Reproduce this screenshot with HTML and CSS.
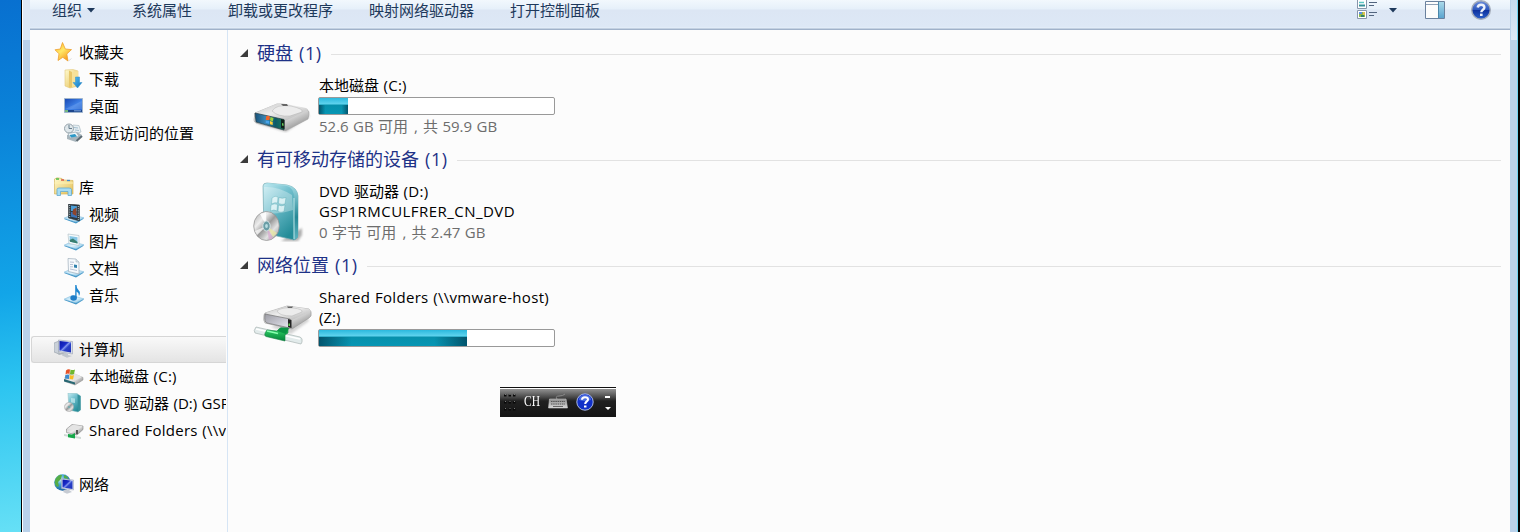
FILE: index.html
```html
<!DOCTYPE html>
<html lang="zh-CN">
<head>
<meta charset="utf-8">
<title>计算机</title>
<link rel="stylesheet" href="styles.css">
</head>
<body>
<svg class="defs" width="0" height="0">
  <defs>
    <linearGradient id="gold" x1="0" y1="0" x2="1" y2="1"><stop offset="0" stop-color="#fffbd0"/><stop offset="1" stop-color="#e4bd52"/></linearGradient>
    <linearGradient id="star" x1="0" y1="0" x2="0.7" y2="1"><stop offset="0" stop-color="#ffb01c"/><stop offset=".5" stop-color="#ffe868"/><stop offset="1" stop-color="#f79618"/></linearGradient>
    <linearGradient id="blue" x1="0" y1="0" x2="1" y2="1"><stop offset="0" stop-color="#1746b0"/><stop offset=".55" stop-color="#3f82e8"/><stop offset="1" stop-color="#2460ca"/></linearGradient>
    <linearGradient id="navy" x1="0" y1="0" x2="1" y2="1"><stop offset="0" stop-color="#0716a8"/><stop offset=".4" stop-color="#1a2cc8"/><stop offset=".5" stop-color="#7f94ee"/><stop offset=".62" stop-color="#2a42c8"/><stop offset="1" stop-color="#1c2fb8"/></linearGradient>
    <linearGradient id="arrow" x1="0" y1="0" x2="1" y2="1"><stop offset="0" stop-color="#52bdf2"/><stop offset="1" stop-color="#1175c0"/></linearGradient>
    <linearGradient id="tray" x1="0" y1="0" x2="1" y2="1"><stop offset="0" stop-color="#9fd3ee"/><stop offset=".5" stop-color="#dcf2fc"/><stop offset="1" stop-color="#6db4dc"/></linearGradient>
    <linearGradient id="metal" x1="0" y1="0" x2="1" y2="1"><stop offset="0" stop-color="#c4c4c4"/><stop offset=".45" stop-color="#ededed"/><stop offset="1" stop-color="#aaa"/></linearGradient>
    <linearGradient id="side" x1="0" y1="0" x2="1" y2="1"><stop offset="0" stop-color="#c2c2c2"/><stop offset=".5" stop-color="#ececec"/><stop offset="1" stop-color="#707070"/></linearGradient>
    <linearGradient id="face" x1="0" y1="0" x2="1" y2="0"><stop offset="0" stop-color="#165079"/><stop offset=".35" stop-color="#3b86b4"/><stop offset=".7" stop-color="#0c5a68"/><stop offset="1" stop-color="#1c7a5c"/></linearGradient>
    <linearGradient id="silver" x1="0" y1="0" x2="1" y2="1"><stop offset="0" stop-color="#9c9ca4"/><stop offset="1" stop-color="#e8e8f2"/></linearGradient>
    <linearGradient id="box" x1="0" y1="0" x2=".6" y2="1"><stop offset="0" stop-color="#c6ecf3"/><stop offset=".4" stop-color="#74c1cf"/><stop offset="1" stop-color="#248c98"/></linearGradient>
    <linearGradient id="spine" x1="0" y1="0" x2="0" y2="1"><stop offset="0" stop-color="#a8dfe8"/><stop offset=".6" stop-color="#248896"/><stop offset="1" stop-color="#5fb5c0"/></linearGradient>
    <linearGradient id="disc" x1="0" y1="0" x2="1" y2="1"><stop offset="0" stop-color="#a8a8a8"/><stop offset=".3" stop-color="#ededed"/><stop offset=".5" stop-color="#9a9a9a"/><stop offset=".7" stop-color="#e2e2e2"/><stop offset="1" stop-color="#858585"/></linearGradient>
    <linearGradient id="green" x1="0" y1="0" x2="0" y2="1"><stop offset="0" stop-color="#32d568"/><stop offset="1" stop-color="#04843a"/></linearGradient>
    <radialGradient id="globe" cx=".35" cy=".3" r=".75"><stop offset="0" stop-color="#d4f3fa"/><stop offset=".4" stop-color="#44a5d2"/><stop offset="1" stop-color="#135a9c"/></radialGradient>
    <linearGradient id="help" x1="0" y1="0" x2="0" y2="1"><stop offset="0" stop-color="#6e8fdc"/><stop offset=".48" stop-color="#2e58bd"/><stop offset=".5" stop-color="#0d2f9c"/><stop offset="1" stop-color="#2d62cc"/></linearGradient>
    <linearGradient id="pane" x1="0" y1="0" x2="0" y2="1"><stop offset="0" stop-color="#a9d9ea"/><stop offset="1" stop-color="#5ba4cf"/></linearGradient>
    <linearGradient id="keys" x1="0" y1="0" x2="0" y2="1"><stop offset="0" stop-color="#8b8b8b"/><stop offset="1" stop-color="#d8d8d8"/></linearGradient>
    <filter id="soft" x="-20%" y="-50%" width="140%" height="200%"><feGaussianBlur stdDeviation="1.3"/></filter>
    <symbol id="base" viewBox="0 0 20 20"><path d="M0 15 8 11.500 20 14.500 12 19.500Z" fill="#3f94c6"/><path d="M0 14.200 8 10.600 20 13.800 12 18Z" fill="url(#tray)" stroke="#7fb9da" stroke-width=".5"/></symbol>
  </defs>
</svg>

<div class="screen">
  <div class="desktop"></div>
  <div class="frame frame-left"></div>
  <div class="window">
    <header class="toolbar">
      <span class="cmd organize">组织<svg width="8" height="5"><path d="M0 0H8L4 4.600Z" fill="#1e395b"/></svg></span>
      <span class="cmd">系统属性</span>
      <span class="cmd">卸载或更改程序</span>
      <span class="cmd">映射网络驱动器</span>
      <span class="cmd">打开控制面板</span>
      <span class="tools">
        <svg class="views" width="21" height="20"><g stroke="#8796ab" fill="#fff"><path d="M.5-.5H9.500V8.500H.5ZM.5 10.500H9.500V18.500H.5Z"/></g><path d="M2 2.500H7" stroke="#5cc7c4" stroke-width="1.500"/><path d="M2 5.500H8" stroke="#348f98" stroke-width="2"/><path d="M2 12H8V17H2Z" fill="#8bb84a"/><path d="M2 12H5V14H2Z" fill="#608ee4"/><path d="M4 15H7V17H4Z" fill="#348064"/><path d="M6 12H8V15H6Z" fill="#dbbe55"/><path d="M12 2.500H20M12 5.500H17M12 12.500H20M12 15.500H17" stroke="#52657f"/></svg>
        <svg class="caret" width="8" height="5"><path d="M0 0H8L4 4.600Z" fill="#1e395b"/></svg>
        <svg class="preview" width="20" height="18"><path d="M.5.5H19.500V17.500H.5Z" fill="#fcfcfc" stroke="#6a819e"/><path d="M1 3.500H13" stroke="#8ea0b6"/><path d="M13 1H19V17H13Z" fill="url(#pane)"/><path d="M13.500 1V17" stroke="#4a87aa"/></svg>
        <svg class="help" width="20" height="20" viewBox="0 0 20 20"><circle cx="10" cy="10" r="9.300" fill="url(#help)" stroke="#a6adba" stroke-width="1.400"/><path d="M6.700 7.500Q7 4.700 10.200 4.700T13.400 7.500C13.400 9.800 10.300 9.700 10.300 12.200" fill="none" stroke="#eef2fb" stroke-width="2.400"/><rect x="9" y="13.600" width="2.600" height="2.400" fill="#eef2fb"/></svg>
      </span>
    </header>
    <div class="body">
      <nav class="nav">
        <div class="row"><svg class="ico" viewBox="0 0 20 20"><path d="M8.500.5 11.300 7 17.500 7.600 12.800 12 14 19 8.800 15.300 4 18.500 5 11.800 1 7.800 6.300 7Z" fill="url(#star)" stroke="#eea030" stroke-width=".8"/><path d="M14.500 19 17.500 16.500" stroke="#ddd" stroke-width="1"/></svg>收藏夹</div>
        <div class="row sub"><svg class="ico" viewBox="0 0 20 20"><path d="M1 1 9 .5 14 2V17L6 19 1 17Z" fill="url(#gold)" stroke="#e2c878" stroke-width=".6"/><path d="M5 1.500 8 3V18L5 18.500Z" fill="#e8c76a"/><path d="M8 4 14 2V17L8 18Z" fill="#f6e29a"/><path d="M11.500 8H15.500V13.500H18L13.500 19 9 13.500H11.500Z" fill="url(#arrow)" stroke="#318ec8" stroke-width=".5"/></svg>下载</div>
        <div class="row sub"><svg class="ico" viewBox="0 0 20 20"><path d="M.5 2.500H18.500V16.500H.5Z" fill="url(#blue)" stroke="#9fb4cc"/><path d="M1 14H18V16H1Z" fill="#1c458c"/><path d="M1 14H4V16H1Z" fill="#72b67e"/><path d="M10 14.800H17" stroke="#79a3dc"/><path d="M1 13 18 5V13Z" fill="#fff" opacity=".12"/></svg>桌面</div>
        <div class="row sub"><svg class="ico" viewBox="0 0 20 20"><path d="M9 2 15 2.500 17 9 11 11 6 9Z" fill="#e6eef2" stroke="#aebdc6" stroke-width=".7"/><path d="M10 4.500 14 5M11 7 15 7.500" stroke="#8fb2c6" stroke-width=".8"/><circle cx="5" cy="5.500" r="4.500" fill="#dfe7eb" stroke="#96a3ab"/><path d="M5 2V5.500H8" fill="none" stroke="#657c8b"/><path d="M3 12 13 9 18 12 12 19 3 16Z" fill="#a9b6bd"/><path d="M4 10.500 12 9 15 13.500 6 15Z" fill="#f0f6f9" stroke="#8d9ea8" stroke-width=".6"/><path d="M5.500 12 11 11 13 13.500 7 14.500Z" fill="#2c98c6"/><path d="M12.500 18 18 13" stroke="#5c6b73" stroke-width="2"/></svg>最近访问的位置</div>
        <div class="gap"></div>
        <div class="row"><svg class="ico" viewBox="0 0 20 20"><path d="M.5 2 3 .8 8 1.500 9 3 19 3.500V17H.5Z" fill="url(#gold)" stroke="#d7b75e" stroke-width=".7"/><path d="M2 2H5" stroke="#4dbb4a" stroke-width="1.500"/><path d="M7 3H10" stroke="#d54b36" stroke-width="1.300"/><path d="M13 3.500H16" stroke="#3b8bd4" stroke-width="1.300"/><path d="M.5 6H19" stroke="#fff3b2"/><path d="M3 18.500V12.500Q3 11 5 11H15Q17.500 11 17.500 12.500V18.500H14V14.500H6.500V18.500Z" fill="#a7dcf2" stroke="#63a9d0" stroke-width=".8"/></svg>库</div>
        <div class="row sub"><svg class="ico" viewBox="0 0 20 20"><use href="#base"/><path d="M4.500 0 15.500 1V17L4.500 14Z" fill="#2f3940" stroke="#1e272c" stroke-width=".5"/><path d="M7 1.500 13 2.300V7.500L7 7Z" fill="#4b9fd8"/><path d="M7 8 13 8.600V14L7 12.700Z" fill="#3a73b7"/><path d="M9 5.500 12.500 3.500V12L8.500 10Z" fill="#8f452b"/><path d="M5.700 1V14M14.300 2V16" stroke="#b9cbcf" stroke-dasharray="1 1.200"/></svg>视频</div>
        <div class="row sub"><svg class="ico" viewBox="0 0 20 20"><use href="#base"/><path d="M4 3 15 4.500V14.500L5 12.500Z" fill="#f6fafb" stroke="#a7bac3" stroke-width=".6"/><path d="M5.500 5 13.500 6.200V12.500L6 10.800Z" fill="#86c6e6"/><path d="M5.500 9 9 7.500 13.500 11V12.500L6 10.800Z" fill="#397f70"/></svg>图片</div>
        <div class="row sub"><svg class="ico" viewBox="0 0 20 20"><use href="#base"/><path d="M4 .5 12 1 15 4V16L4.500 13.500Z" fill="#f6f9fc" stroke="#9dadba" stroke-width=".7"/><path d="M12 1V4H15" fill="#d9e2ea" stroke="#9dadba" stroke-width=".5"/><path d="M6 4 10 4.300M6 6.500H9M6 8.800H9M6 11 13 12.500" stroke="#a8b4ca" stroke-width=".8"/><path d="M10 6.500 13 7V10L10 9.500Z" fill="#3282ae"/></svg>文档</div>
        <div class="row sub"><svg class="ico" viewBox="0 0 20 20"><use href="#base"/><path d="M11.200 0H12.500Q12.500 3.500 14.800 5.500 17 7.500 15 11 15 7.500 12.600 6.500V13H11.200Z" fill="#2087d0"/><ellipse cx="9.600" cy="13" rx="3.300" ry="2.800" fill="#207ec8"/></svg>音乐</div>
        <div class="gap"></div>
        <div class="row selected"><svg class="ico" viewBox="0 0 20 20"><path d="M0 4 5 2V15L0 13Z" fill="#c9d0d8" stroke="#929ba6" stroke-width=".6"/><path d="M4.500 1 18.500 2.500V15L4.500 12.500Z" fill="#d8deea" stroke="#9aa3b2" stroke-width=".6"/><path d="M5.500 2 17 3.300V13.500L5.500 11.500Z" fill="url(#navy)"/><path d="M9 13.500 14 14.500V16L18 17 13 18.800 8 16.500Z" fill="#c0c6cd"/><path d="M3 14 9 13.500 10 15 5 16Z" fill="#aeb5bc"/></svg>计算机</div>
        <div class="row sub"><svg class="ico" viewBox="0 0 20 20"><path d="M1 11 8 7 19 11.500V14L11 19 1 15.500Z" fill="url(#side)" stroke="#8e8e8e" stroke-width=".5"/><path d="M5 10 11 7.500 18 11 11 14.500Z" fill="#e3e3e3"/><path d="M0 13 11 16.500V18.500L0 15.500Z" fill="#286773"/><path d="M2 4.500Q4 2.500 6 3.500L5.500 8Q3.500 7 1.500 8.500Z" fill="#e55329"/><path d="M6.500 3.500Q8.500 4.500 11 3.500L10 8Q8 9 6 8Z" fill="#6eb72f"/><path d="M1.300 9Q3.500 8 5.200 9L5 13 1 12.500Z" fill="#3d8cd0"/><path d="M6 9Q8 10 10 9L9 13.500 5.500 13Z" fill="#f7bd21"/></svg><span>本地磁盘 <span class="drive">(C:)</span></span></div>
        <div class="row sub"><svg class="ico" viewBox="0 0 20 20"><path d="M4 0 13 .5 16.500 3V17L14 19 5 17Z" fill="url(#box)" stroke="#8ababf" stroke-width=".5"/><path d="M13.500 1.500 16.500 3V17L14 18.500Z" fill="#35929d"/><path d="M7 5 11 5.500V10L7 9.500Z" fill="#c8edf1" opacity=".7"/><circle cx="5" cy="14" r="4.600" fill="url(#disc)" stroke="#aaa" stroke-width=".5"/><circle cx="5" cy="14" r="1.300" fill="#79a8ab"/></svg><span>DVD 驱动器 (D:) GSP1RMCULFRER_CN_DVD</span></div>
        <div class="row sub"><svg class="ico" viewBox="0 0 20 20"><path d="M2.500 9 8 4.500 19 6V9.500L13 15 2.500 12.500Z" fill="url(#side)" stroke="#858585" stroke-width=".6"/><path d="M3.500 8.500 9 4.800 18.500 6.200 13 10.500Z" fill="#e4e4e4"/><path d="M12 10 14 10V14H12Z" fill="#555"/><path d="M0 14 17 17V19L0 16Z" fill="#d0dbd7"/><path d="M4 14 8 14.500 11 13V18.500L4 17.200Z" fill="#16a749"/></svg><span class="wide">Shared Folders (\\vmware-host) (Z:)</span></div>
        <div class="gap"></div>
        <div class="row"><svg class="ico" viewBox="0 0 20 20"><circle cx="8.500" cy="8.500" r="8.300" fill="url(#globe)"/><path d="M2 4Q5 0 8 1L7 5 4 8 5 12 3 13Q-1 9 2 4ZM10 1Q15 3 14 5L10 4Z" fill="#55ad46"/><path d="M7.500 4.500 19.500 6V16L7.500 14.500Z" fill="#dce2ef" stroke="#949db0" stroke-width=".5"/><path d="M8.500 5.500 18.500 6.800V15L8.500 13.500Z" fill="url(#navy)"/><path d="M11 15.500 15 16 18 18 13 19.700 9 18Z" fill="#c6cbd3"/></svg>网络</div>
      </nav>
      <main class="content">
        <section class="group">
          <h2><svg class="tri" width="8" height="8"><path d="M8 0V8H0Z" fill="#3b3b3b"/></svg>硬盘<span>(1)</span><i></i></h2>
          <div class="item">
            <svg class="big" width="60" height="60" viewBox="0 0 60 60"><path d="M3 50 33 59 57 43 50 38Z" fill="#777" opacity=".45" filter="url(#soft)"/><path d="M2 40 24 31 53 36Q57 38 56 41L55 46 34 57Q32 58 30 57L3 50Q1 49 1 47Z" fill="url(#side)" stroke="#a2a2a2" stroke-width=".6"/><path d="M2 40 23 31Q25 30 28 30L53 35Q57 37 53 38L34 47Q32 48 30 47Z" fill="url(#metal)"/><path d="M19 38Q23 31 38 33 51 36 49 39L37 43Q25 44 19 38Z" fill="#ececec" stroke="#b0b0b0" stroke-width=".5"/><path d="M28 31H34L35 33H30Z" fill="#666"/><path d="M2 40 31 46.500V57L3 49Z" fill="url(#face)" stroke="#273f48" stroke-width=".7"/><path d="M13 43.500Q15 42 17 43.800L16.500 47H12.800Z" fill="#ef6528"/><path d="M17.500 44 20.500 45 19.800 48.500 17 47.300Z" fill="#9bd03b"/><path d="M12.700 47.500 16.400 47.700V51L12.700 50Z" fill="#48a3eb"/><path d="M17 48 19.700 49V52L17 51.300Z" fill="#ffd139"/><path d="M28 46 31.500 47V56L28 55Z" fill="#10221a"/><path d="M29 50 30.500 50.500V53L29 52.500Z" fill="#6ac657"/></svg>
            <div class="info"><p>本地磁盘 <span class="drive">(C:)</span></p><div class="meter"><b style="width:12.2%"></b></div><p class="dim">52.6 GB 可用<span class="comma">,</span>共 59.9 GB</p></div>
          </div>
        </section>
        <section class="group">
          <h2><svg class="tri" width="8" height="8"><path d="M8 0V8H0Z" fill="#3b3b3b"/></svg>有可移动存储的设备<span>(1)</span><i></i></h2>
          <div class="item">
            <svg class="big dvd" width="60" height="60" viewBox="0 0 60 60"><path d="M28 59 45 59 49 53V46Z" fill="#666" opacity=".5" filter="url(#soft)"/><path d="M10 4Q10 1 14 1L34 3Q44 5 45 14V53Q45 57 41 58L11 51Z" fill="url(#box)" stroke="#7eaeb4" stroke-width=".7"/><path d="M12 2 34 4Q41 6 41 16V58L45 55V14Q44 5 34 3L15 1Z" fill="url(#spine)"/><path d="M11 5Q25 4 39 13L40 28Q21 34 11 30Z" fill="#fff" opacity=".3"/><path d="M41 16V57" stroke="#c0e6e9"/><g fill="#f0fcfd" opacity=".75" stroke="#4099a4" stroke-width=".4"><path d="M19 16Q22 13 25 15L24.500 21Q22 20 18.500 22Z"/><path d="M26 15.500Q29 17 33 15.500L32 22Q29 23 25.500 21.500Z"/><path d="M18 23Q22 21 24.500 22.500L24 29Q21 27 17.500 29Z"/><path d="M25.500 23Q28 24.500 32 23L31 29.500Q28 31 25 29.500Z"/></g><ellipse cx="13.500" cy="44" rx="12.800" ry="14.500" fill="url(#disc)" stroke="#8e8e8e" stroke-width=".7"/><path d="M13.500 44 7 32 13 30Z" fill="#fff" opacity=".85"/><path d="M13.500 44 24 51 20 55Z" fill="#e7e6a5" opacity=".8"/><path d="M13.500 44 16 58 20 56Z" fill="#d7a6cf" opacity=".7"/><path d="M13.500 44 2 49 4 53Z" fill="#fff" opacity=".7"/><ellipse cx="13.500" cy="44" rx="3.700" ry="5" fill="#6a9ea6" stroke="#d8e4e6"/><ellipse cx="13.500" cy="44" rx="1.400" ry="2" fill="#b9dee2"/></svg>
            <div class="info"><p>DVD 驱动器 <span class="drive">(D:)</span></p><p class="second volume">GSP1RMCULFRER_CN_DVD</p><p class="dim">0 字节 可用<span class="comma">,</span>共 2.47 GB</p></div>
          </div>
        </section>
        <section class="group">
          <h2><svg class="tri" width="8" height="8"><path d="M8 0V8H0Z" fill="#3b3b3b"/></svg>网络位置<span>(1)</span><i></i></h2>
          <div class="item">
            <svg class="big net" width="60" height="60" viewBox="0 0 60 60"><path d="M18 40 38 47 56 34 51 25Z" fill="#888" opacity=".35" filter="url(#soft)"/><path d="M12 26 34 19 56 22Q59 24 58 29L56 31 39 42 12 36Q10 34 11 28Z" fill="url(#side)" stroke="#999" stroke-width=".6"/><path d="M12 26 31 20 34 19 56 22Q59 24 56 25L39 33Z" fill="url(#metal)"/><path d="M24 24Q28 20 40 21 50 22 49 25L39 29Q26 29 24 24Z" fill="#ececec" stroke="#b3b3b3" stroke-width=".5"/><path d="M34 19.500H40L39 21H35Z" fill="#666"/><path d="M12 27 37 32V41L14 36Q11 35 12 27Z" fill="url(#silver)" stroke="#777" stroke-width=".7"/><path d="M35 32 38.500 33V41L35 40Z" fill="#222"/><path d="M35.500 36.500H37V39H35.500Z" fill="#62cf52"/><path d="M3 40 47 50Q50 51 49 55L48 57 2 46Q0 44 3 40Z" fill="#e2ebeb" stroke="#a9b4b3" stroke-width=".7"/><path d="M3 42 47 52" stroke="#fff" stroke-width="1.500"/><path d="M14 43 24 44 27 41 35 41V46L32 48V54L13 49.500Q10 48 14 43Z" fill="url(#green)" stroke="#168244" stroke-width=".6"/><path d="M24 44 28 40.500 36 41 33 47Z" fill="#0a9444"/><path d="M14 44 25 46.500" stroke="#88ffaf" stroke-width="1.500"/></svg>
            <div class="info"><p class="share">Shared Folders (\\vmware-host)</p><p class="second">(Z:)</p><div class="meter"><b style="width:63%"></b></div></div>
          </div>
        </section>
      </main>
    </div>
  </div>
  <div class="frame frame-right"></div>
</div>

<div class="langbar">
  <svg width="12" height="18"><path d="M0 2.500H12M0 9.500H12M0 16.500H12" stroke="#080808" stroke-width="2" stroke-dasharray="2.500 2"/><path d="M1 1.500H12M1 8.500H12M1 15.500H12" stroke="#777" stroke-dasharray="1 3.500"/></svg>
  <span>CH</span>
  <svg class="kbd" width="20" height="18"><path d="M9 6Q7 3 11 3T17 1" fill="none" stroke="#8a8a8a"/><path d="M1.500 6H18L19.500 15H.5Z" fill="url(#keys)" stroke="#ccc" stroke-width=".6"/><path d="M3 8.500H17M3 11H17" stroke="#555" stroke-dasharray="1.500 .7"/><path d="M5 13.500H15" stroke="#666"/></svg>
  <svg class="q" width="18" height="18" viewBox="0 0 18 18"><circle cx="9" cy="9" r="8.200" fill="#1130c8" stroke="#a9b9e6"/><path d="M3 7Q3 2 9 2T15 7Q9 9 3 7Z" fill="#7294ef" opacity=".6"/><path d="M6 6.800Q6 4.300 9 4.300T12 6.500C12 8.500 9.200 8.300 9.200 11" fill="none" stroke="#fff" stroke-width="2"/><path d="M8 12.500H10.500V14.500H8Z" fill="#fff"/></svg>
  <svg class="opts" width="6" height="16"><path d="M0 1H5V3H0ZM0 12H6L3 15Z" fill="#fff"/></svg>
</div>
</body>
</html>
```
FILE: styles.css
```css
* { box-sizing: border-box; }
body { margin: 0; overflow: hidden; font: 15px/20px "Open Sans", "Noto Sans CJK SC", sans-serif; word-spacing: .5px; color: #000; white-space: nowrap; }
.defs { display: block; position: absolute; }
.screen { display: flex; height: 532px; background: #fcfcfc; }
.desktop { width: 21px; background: linear-gradient(172deg, #0870d0 0, #0a82d8 22%, #12a5e8 55%, #2cc4f0 72%, #66e0f6 100%); }
.frame { background: linear-gradient(#dce8f6 0 40px, #b9d1ea 40px); }
.frame-left { width: 9px; border-left: 1px solid #000; box-shadow: inset 1px 0 #fff; }
.frame-right { width: 10px; border-right: 2px solid #000; box-shadow: inset -1px 0 #70d5f4; background: linear-gradient(90deg, #b9d1ea 1px, transparent 1px), linear-gradient(#c5daef 0, #dce8f6 40px, #b9d1ea 40px); }
.window { flex: 1; min-width: 0; display: flex; flex-direction: column; }

.toolbar { height: 30px; display: flex; align-items: flex-start; padding-left: 22px; color: #1e395b; background: linear-gradient(#f2f8fd 0, #e6f0fa 9px, #dce6f4 10px, #dde8f6 27px, #e6f0fa 28px, #a0b2ca 29px); }
.cmd { margin-right: 36px; line-height: 21px; }
.organize { display: flex; align-items: center; gap: 5px; margin-right: 37px; }
.tools { margin-left: auto; display: flex; align-items: flex-start; padding-right: 19px; }
.caret { margin: 8px 28px 0 11px; }
.preview { margin: 1px 26px 0 0; }

.body { flex: 1; display: flex; min-height: 0; }
.nav { width: 198px; padding: 9px 1px 0 1px; border-right: 1px solid #d6e5f5; overflow: hidden; }
.row { height: 27px; display: flex; align-items: center; gap: 5px; padding: 0 0 2px 23px; overflow: hidden; }
.sub { padding-left: 33px; }
.gap { height: 27px; }
.ico { width: 20px; height: 20px; margin-top: 1px; flex: none; }
.wide { letter-spacing: .24px; }
.drive { letter-spacing: .3px; }
.selected { border: 1px solid #d6d6d6; border-right: 0; border-radius: 3px 0 0 3px; padding-left: 22px; background: linear-gradient(#f9f9f9, #e4e4e4); }

.content { flex: 1; padding: 10px 9px 0 12px; }
.group { height: 106px; }
h2 { margin: 0; height: 27px; display: flex; align-items: center; padding-bottom: 2px; font-size: 18px; font-weight: 400; color: #1e3287; }
h2 span { margin-left: 6px; letter-spacing: .6px; }
.tri { margin: 1px 9px 0 0; }
h2 i { flex: 1; height: 1px; margin: 3px 0 0 9px; background: #e2e2e2; }
.item { display: flex; height: 79px; padding-left: 13px; }
.big { margin-top: 6px; flex: none; }
.dvd { margin-top: 9px; }
.net { margin-top: 8px; }
.info { width: 237px; margin: 8px 0 0 5px; }
.info p { margin: 0; padding-left: 1px; height: 20px; }
.info .dim { color: #6d6d6d; margin-top: 1px; }
.info .volume { letter-spacing: .46px; }
.share { letter-spacing: .3px; }
.comma { display: inline-block; width: 15px; padding-left: 6px; }
.meter { height: 18px; margin-top: 2px; border: 1px solid #999; border-radius: 2px; background: #fff; }
.meter b { display: block; height: 100%; max-width: 148px; background: linear-gradient(90deg, #00384fb0 0, transparent 22%, transparent 78%, #00384fb0 100%) 0 7px / 100% 9px no-repeat, linear-gradient(#2bb8dd 0, #5fd3ee 6px, #0790ab 7px, #0696b4 100%); }

.langbar { position: absolute; left: 500px; top: 387px; width: 116px; height: 30px; display: flex; align-items: center; padding: 0 0 2px 4px; color: #fff; border-top: 1px solid #111; background: linear-gradient(#fff 0 1px, #929292 1px, #4a4a4a 9px, #202020 13px, #141414 100%); font: 14px "Liberation Serif", serif; }
.langbar span { margin-left: 8px; width: 16px; transform: scaleX(.82); transform-origin: left; }
.kbd { margin-left: 8px; }
.q { margin-left: 8px; }
.opts { margin: 3px 0 0 11px; }
```
